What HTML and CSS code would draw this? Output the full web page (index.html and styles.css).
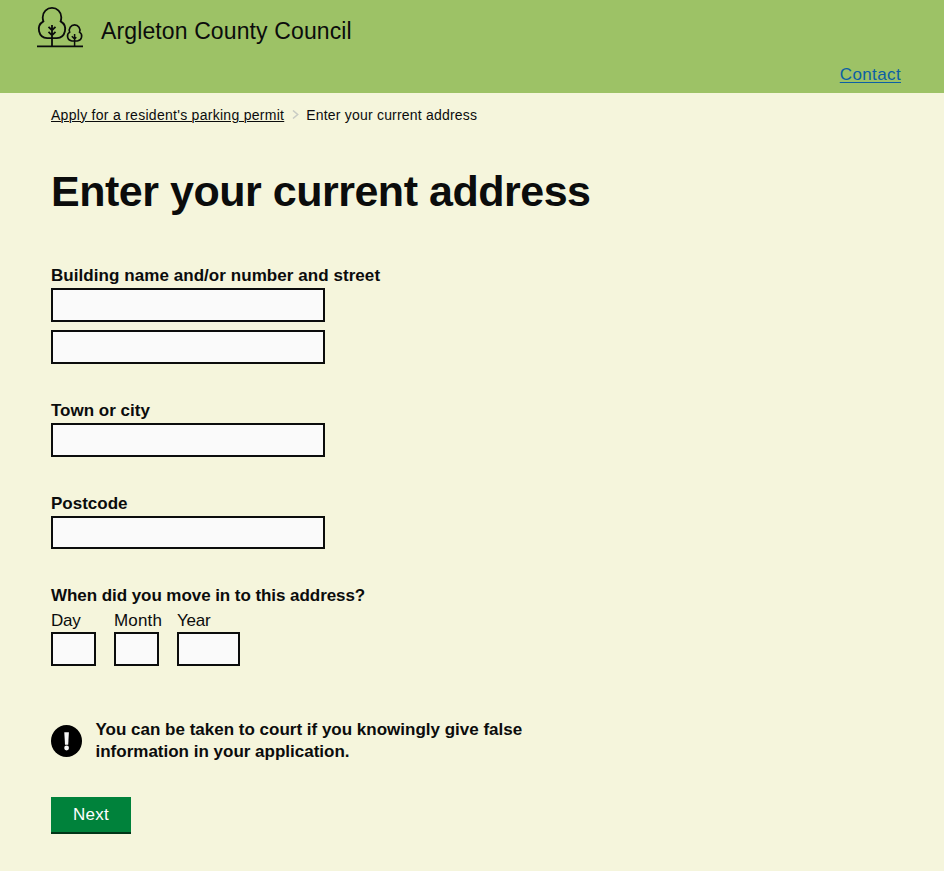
FILE: index.html
```html
<!DOCTYPE html>
<html lang="en">
<head>
<meta charset="utf-8">
<title>Enter your current address</title>
<link rel="stylesheet" href="styles.css">
</head>
<body>
<header class="header">
  <div class="brand">
    <svg class="logo" width="48" height="42" viewBox="0 0 48 42" fill="none" stroke="#0b0c0c" stroke-width="1.8">
      <path d="M1 39.3H47"/>
      <path d="M16 31.2H11.2A9 9 0 0 1 7.4 14.4Q6.7 12.5 6.7 10.2A9.3 9.3 0 0 1 25.3 10.2Q25.3 12.5 24.6 14.4A9 9 0 0 1 20.8 31.2Z"/>
      <path d="M16 18V39M12.5 19.8L16 23.2L19.5 19.8M12.5 24.8L16 28.3L19.5 24.8"/>
      <path stroke-width="1.6" d="M38.6 34H35.9A4.8 4.8 0 0 1 33.7 25.2A5.3 5.3 0 1 1 43.5 25.2A4.8 4.8 0 0 1 41.3 34Z"/>
      <path stroke-width="1.5" d="M38.6 27V39M35.8 29.2L38.6 32L40.3 30.3"/>
    </svg>
    <span class="council">Argleton County Council</span>
  </div>
  <nav class="nav"><a class="contact" href="#">Contact</a></nav>
</header>
<main class="main">
  <nav class="crumbs">
    <a class="crumb-link" href="#">Apply for a resident's parking permit</a>
    <svg class="chevron" width="7" height="9" viewBox="0 0 7 9" fill="none" stroke="#c8cbc4" stroke-width="1.5"><path d="M1 .5L5.7 4.5L1 8.5"/></svg>
    <span class="crumb-current">Enter your current address</span>
  </nav>
  <h1 class="title">Enter your current address</h1>
  <form class="form">
    <div class="field">
      <label class="label building" for="line1">Building name and/or number and street</label>
      <input class="input" id="line1" type="text">
      <input class="input second" type="text" aria-label="Street line 2">
    </div>
    <div class="field">
      <label class="label" for="town">Town or city</label>
      <input class="input" id="town" type="text">
    </div>
    <div class="field">
      <label class="label" for="postcode">Postcode</label>
      <input class="input short" id="postcode" type="text">
    </div>
    <fieldset class="dates">
      <legend class="label moved">When did you move in to this address?</legend>
      <div class="date-row">
        <label class="date day">Day<input class="input" type="text"></label>
        <label class="date month">Month<input class="input" type="text"></label>
        <label class="date year">Year<input class="input" type="text"></label>
      </div>
    </fieldset>
    <div class="warning">
      <svg class="warning-icon" width="31" height="33" viewBox="0 0 31 33"><ellipse cx="15.5" cy="16" rx="15.5" ry="16" fill="#000"/><path d="M13.3 7.2H17.9L17.2 19.7H14Z" fill="#f5f5f5"/><circle cx="15.6" cy="23" r="2.4" fill="#f5f5f5"/></svg>
      <p class="warning-text">You can be taken to court if you knowingly give false<br>information in your application.</p>
    </div>
    <button class="button" type="button">Next</button>
  </form>
</main>
</body>
</html>
```
FILE: styles.css
```css
* { box-sizing: border-box; }
body {
  margin: 0;
  min-height: 871px;
  background: #f5f5dc;
  color: #0b0c0c;
  font-family: "Liberation Sans", Arial, sans-serif;
  font-size: 17px;
  line-height: 22px;
}
.header { height: 93px; background: #9dc266; }
.brand { display: flex; height: 64px; padding: 7px 0 0 36px; }
.logo { flex: none; }
.council { margin-left: 17px; font-size: 23px; line-height: 49px; white-space: nowrap; letter-spacing: .12px; }
.nav { display: flex; justify-content: flex-end; padding-right: 43px; }
.contact { color: #0b5fa5; letter-spacing: .38px; text-underline-offset: 2px; text-decoration-thickness: 1px; }
.main { padding: 11px 51px 0; }
.crumbs { display: flex; align-items: center; height: 22px; font-size: 14px; white-space: nowrap; }
.crumb-link { color: inherit; letter-spacing: .28px; text-underline-offset: 1px; text-decoration-thickness: 1px; }
.crumb-current { letter-spacing: .2px; }
.chevron { margin: 0 7px 2px 8px; }
.title { margin: 40px 0 49px; font-size: 43px; line-height: 50px; white-space: nowrap; letter-spacing: -.48px; }
.label { display: block; padding: 0; font-weight: bold; white-space: nowrap; }
.building { letter-spacing: .06px; }
.moved { letter-spacing: -.06px; }
.field { margin-bottom: 36px; }
.input {
  display: block;
  width: 274px;
  height: 34px;
  margin: 1px 0 0;
  padding: 4px;
  border: 2px solid #0b0c0c;
  border-radius: 0;
  background: #fafafa;
  font: inherit;
}
.second { margin-top: 8px; }
.short { height: 33px; }
.dates { min-width: 0; margin: 0; padding: 0; border: 0; }
.date-row { display: flex; gap: 18px; margin-top: 3px; }
.date { width: 45px; white-space: nowrap; }
.date .input { width: 45px; margin-top: 0; }
.day, .year { letter-spacing: -.2px; }
.month { letter-spacing: .15px; }
.year, .year .input { width: 63px; }
.warning { display: flex; margin-top: 53px; }
.warning-icon { flex: none; margin-top: 6px; }
.warning-text { margin: 0 0 0 13.5px; font-weight: bold; white-space: nowrap; }
.button {
  display: block;
  width: 80px;
  height: 37px;
  margin-top: 34px;
  padding: 0;
  border: 0;
  border-bottom: 2px solid #003618;
  background: #00823b;
  color: #fff;
  font: inherit;
  letter-spacing: .2px;
}
```
